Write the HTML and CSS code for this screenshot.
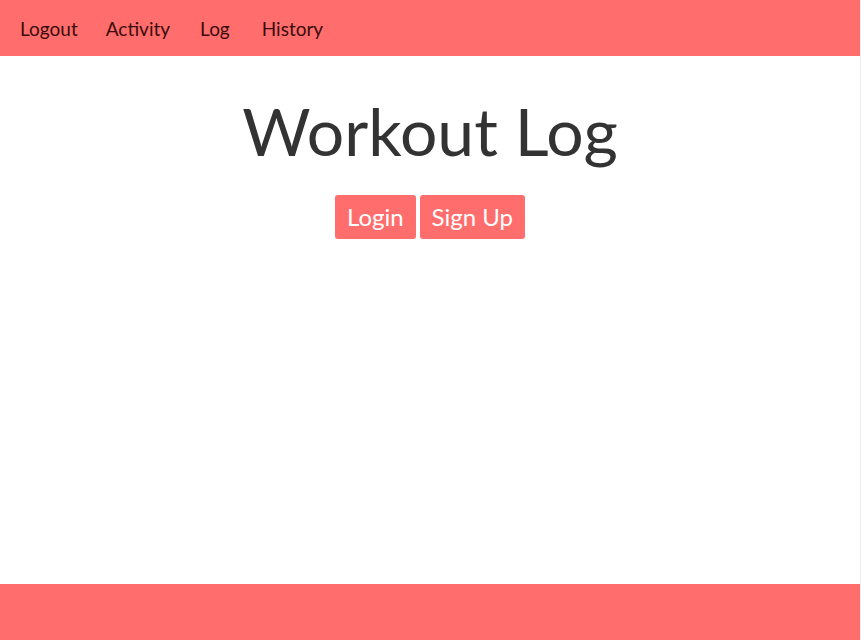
FILE: index.html
```html
<!DOCTYPE html>
<html>
<head>
<meta charset="utf-8">
<link rel="stylesheet" href="styles.css">
</head>
<body>
<div class="page">
  <nav class="navbar">
    <a class="nav-link" href="#">Logout</a>
    <a class="nav-link" href="#">Activity</a>
    <a class="nav-link nav-link-wide" href="#">Log</a>
    <a class="nav-link nav-link-wider" href="#">History</a>
  </nav>
  <main class="main">
    <h1 class="title">Workout Log</h1>
    <div class="actions">
      <button class="btn">Login</button>
      <button class="btn">Sign Up</button>
    </div>
  </main>
  <footer class="footer"></footer>
</div>
</body>
</html>
```
FILE: styles.css
```css
html, body {
  margin: 0;
  padding: 0;
  height: 100%;
  background: #fff;
}
body {
  font-family: "Lato", "Open Sans", sans-serif;
}
.page {
  width: 860px;
  height: 640px;
  display: flex;
  flex-direction: column;
  border-right: 1px solid #eeeeee;
}
.navbar {
  height: 56px;
  background: #ff6d6d;
  display: flex;
  align-items: center;
  padding-left: 20px;
  gap: 28px;
}
.nav-link {
  color: #3a0c0c;
  text-decoration: none;
  font-size: 19px;
  line-height: 1;
}
.nav-link-wide {
  margin-left: 2px;
}
.nav-link-wider {
  margin-left: 4px;
}
.main {
  flex: 1;
  text-align: center;
}
.title {
  margin: 32px 0 0;
  font-size: 66px;
  font-weight: 400;
  color: #333;
  line-height: 86px;
}
.actions {
  margin-top: 21px;
  display: flex;
  justify-content: center;
  gap: 4px;
}
.btn {
  background: #ff6d6d;
  color: #fff;
  border: none;
  border-radius: 3px;
  font-family: inherit;
  font-size: 24px;
  height: 44px;
  padding: 0 12px 2px;
}
.footer {
  height: 56px;
  background: #ff6d6d;
}
```
